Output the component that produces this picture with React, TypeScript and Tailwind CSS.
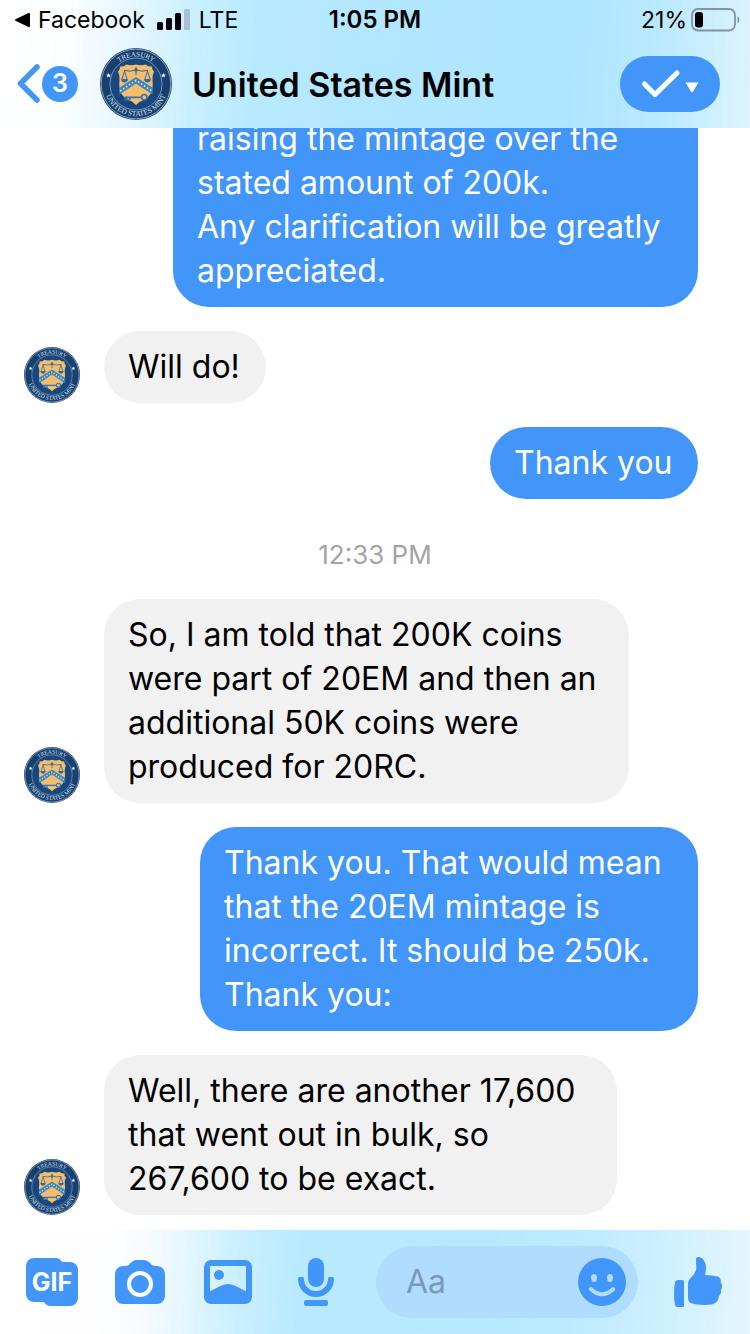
import { useId } from "react";

type Message = {
  id: number;
  from: "me" | "mint";
  lines: string[];
  width: string;
  continued?: boolean;
};

const earlier: Message[] = [
  {
    id: 1,
    from: "me",
    lines: [
      "raising the mintage over the",
      "stated amount of 200k.",
      "Any clarification will be greatly",
      "appreciated.",
    ],
    width: "w-[525px]",
    continued: true,
  },
  { id: 2, from: "mint", lines: ["Will do!"], width: "w-[162px]" },
  { id: 3, from: "me", lines: ["Thank you"], width: "w-[208px]" },
];

const later: Message[] = [
  {
    id: 4,
    from: "mint",
    lines: [
      "So, I am told that 200K coins",
      "were part of 20EM and then an",
      "additional 50K coins were",
      "produced for 20RC.",
    ],
    width: "w-[525px]",
  },
  {
    id: 5,
    from: "me",
    lines: [
      "Thank you. That would mean",
      "that the 20EM mintage is",
      "incorrect. It should be 250k.",
      "Thank you:",
    ],
    width: "w-[498px]",
  },
  {
    id: 6,
    from: "mint",
    lines: [
      "Well, there are another 17,600",
      "that went out in bulk, so",
      "267,600 to be exact.",
    ],
    width: "w-[513px]",
  },
];

function Seal({ className }: { className: string }) {
  const id = useId();
  return (
    <svg viewBox="0 0 72 72" className={className} role="img" aria-label="United States Mint">
      <defs>
        <path id={`${id}-top`} d="M8.500 36a27.500 27.500 0 0 1 55 0" />
        <path id={`${id}-bottom`} d="M3.800 36a32.200 32.200 0 0 0 64.400 0" />
      </defs>
      <circle cx="36" cy="36" r="36" fill="#173f70" />
      <circle cx="36" cy="36" r="34.800" fill="none" stroke="#a9bccb" strokeWidth="0.800" />
      <circle cx="36" cy="36" r="26" fill="#17477e" stroke="#8fabc4" strokeWidth="0.800" />
      <g fill="#dbe6ee" fontFamily="Liberation Serif, serif">
        <text textAnchor="middle" fontSize="7">
          <textPath href={`#${id}-top`} startOffset="50%">TREASURY</textPath>
        </text>
        <text textAnchor="middle" fontSize="7.500">
          <textPath href={`#${id}-bottom`} startOffset="50%">UNITED  STATES  MINT</textPath>
        </text>
      </g>
      <path
        d="M8.500 25l.700 1.600 1.700.100-1.300 1.100.400 1.700-1.500-.900-1.500.900.400-1.700-1.300-1.100 1.700-.100zM63.500 25l.700 1.600 1.700.100-1.300 1.100.400 1.700-1.500-.900-1.500.900.400-1.700-1.300-1.100 1.700-.100z"
        fill="#fff"
      />
      <path
        d="M20 18.500q4 .500 6.500-2 4.500 1.500 9.500 0 5 1.500 9.500 0 2.500 2.500 6.500 2-.500 3 2 5-2 4-1.500 9 1 8-2 13.500-2.500 4-7 6-4.500 1.500-7.500 5-3-3.500-7.500-5-4.500-2-7-6-3-5.500-2-13.500.500-5-1.500-9 2.500-2 2-5z"
        fill="#f3bd6b"
      />
      <g fill="none" stroke="#2f6ba2" strokeWidth="1" strokeLinecap="round">
        <path d="M36 19.500v7M24.500 22.500q6 1.500 11.500-.500 5.500 2 11.500.500M24.500 23l-2.500 8M24.500 23l2.500 8M47.500 23l-2.500 8M47.500 23l2.500 8" />
      </g>
      <path d="M21 31h7q-.500 3.500-3.500 3.500T21 31zM44 31h7q-.500 3.500-3.500 3.500T44 31zM34 22l2-2.500 2 2.500-2 2.500z" fill="#2f6ba2" />
      <path d="M19 40L36 29l17 11-.500 6.500L36 35.500 19.500 46.500z" fill="#3b82bf" />
      <path d="M20 43L36 32.300 52 43" fill="none" stroke="#e5f1f8" strokeWidth="1.600" strokeDasharray="1.600 2" />
      <path d="M24.500 48.500H42v1.800H30.500v2.500h-1.800v-2.500h-1.200v2.500h-3z" fill="#2f73b4" />
      <circle cx="44.300" cy="49.300" r="2.700" fill="none" stroke="#2f73b4" strokeWidth="1.500" />
    </svg>
  );
}

function Row({ message }: { message: Message }) {
  const mine = message.from === "me";
  return (
    <li className={mine ? "flex justify-end" : "flex items-end gap-6"}>
      {!mine && <Seal className="size-14 shrink-0" />}
      <p
        className={`${message.width} max-w-full px-6 py-3.5 whitespace-nowrap ${
          message.continued ? "rounded-b-[36px]" : "rounded-[36px]"
        } ${mine ? "bg-[#4396f9] text-white" : "bg-[#f1f1f1] text-black"}`}
      >
        {message.lines.map((line) => (
          <span key={line} className="block">
            {line}
          </span>
        ))}
      </p>
    </li>
  );
}

function StatusBar() {
  return (
    <div className="grid h-10 grid-cols-3 items-center px-3.5 text-[23px] leading-10">
      <div className="flex items-center whitespace-nowrap">
        <svg viewBox="0 0 16 16" className="mr-2 size-4 shrink-0" aria-hidden="true">
          <path d="M1.500 7.200L14.500 1q1.500-.500 1.500 1v12q0 1.500-1.500 1L1.500 8.800q-1.500-.800 0-1.600z" />
        </svg>
        <a href="#facebook">Facebook</a>
        <svg viewBox="0 0 34 22" className="mr-2 ml-3 h-[22px] w-[34px] shrink-0" aria-label="Signal strength">
          <rect x="0" y="13" width="6" height="8" rx="1.500" />
          <rect x="9" y="9" width="6" height="12" rx="1.500" />
          <rect x="18" y="4" width="6" height="17" rx="1.500" />
          <rect x="27" y="0" width="6" height="21" rx="1.500" fill="#a9c0d8" />
        </svg>
        <span>LTE</span>
      </div>
      <time className="text-center text-[24px] font-semibold">1:05 PM</time>
      <div className="-mr-1 flex items-center justify-end gap-1">
        <span>21%</span>
        <svg viewBox="0 0 49 24" className="h-6 w-[49px] shrink-0" aria-label="Battery">
          <rect x="1" y="1" width="43" height="21.500" rx="6" fill="none" stroke="#8093a9" strokeWidth="1.800" />
          <rect x="4" y="4" width="8" height="15.500" rx="3" />
          <path d="M46.500 8q2 1.500 2 3.700t-2 3.700z" fill="#8093a9" />
        </svg>
      </div>
    </div>
  );
}

function Header() {
  return (
    <header className="shrink-0 bg-[linear-gradient(93deg,#ffffff_0%,#fbfeff_9%,#e4f6ff_18%,#c8efff_26%,#b8eaff_34%,#b1e6ff_55%,#ade5ff_76%,#b9e9ff_87%,#cbefff_94%,#def3ff_100%)]">
      <StatusBar />
      <div className="flex h-[88px] items-center pr-[30px] pl-4">
        <button type="button" aria-label="Back, 3 unread" className="flex shrink-0 items-center text-[#4396f9]">
          <svg viewBox="0 0 26 42" className="h-[42px] w-[26px]" fill="none" stroke="currentColor" strokeWidth="5.500" strokeLinecap="round" strokeLinejoin="round">
            <path d="M21 4L4.500 20.500 21 37" />
          </svg>
          <span className="flex size-9 items-center justify-center rounded-full bg-[#4396f9] text-[25px] font-semibold text-white">
            3
          </span>
        </button>
        <Seal className="ml-[22px] size-[72px] shrink-0" />
        <h1 className="ml-5 flex-1 text-[34px] font-semibold whitespace-nowrap">United States Mint</h1>
        <button type="button" aria-label="Conversation options" className="h-14 w-[100px] shrink-0 rounded-[28px] bg-[#4396f9]">
          <svg viewBox="0 0 100 56" className="h-14 w-[100px]">
            <path d="M24.500 28L35 38.500 57 17" fill="none" stroke="#fff" strokeWidth="5" strokeLinecap="round" strokeLinejoin="round" />
            <path d="M66.500 26.500h11q1 0 .400 1l-5 8.300q-.900 1-1.800 0l-5-8.300q-.600-1 .400-1z" fill="#fff" />
          </svg>
        </button>
      </div>
    </header>
  );
}

const toolClass = "flex h-12 w-12 shrink-0 items-center justify-center";

function Composer() {
  return (
    <footer className="flex h-[104px] shrink-0 items-center gap-9 bg-[linear-gradient(93deg,#ffffff_0%,#fefeff_13%,#f8fcff_19%,#e3f6ff_25%,#c9efff_32%,#b8eaff_40%,#b6e9ff_65%,#bcebff_76%,#cceffe_87%,#e4f6ff_100%)] px-7 text-[#4396f9]">
      <div className="flex shrink-0 gap-10">
        <button type="button" aria-label="GIF" className={toolClass}>
          <svg viewBox="0 0 52 48" className="h-12 w-[52px] shrink-0" fill="currentColor">
            <path d="M8 0h22c5 0 4.500 4 8 4h6a8 8 0 0 1 8 8v28a8 8 0 0 1-8 8H25c-6 0-5-4-9-4H8a8 8 0 0 1-8-8V8a8 8 0 0 1 8-8z" />
            <text x="26" y="33" textAnchor="middle" fill="#fff" fontSize="25" fontWeight="700">
              GIF
            </text>
          </svg>
        </button>
        <button type="button" aria-label="Camera" className={toolClass}>
          <svg viewBox="0 0 50 44" className="h-11 w-[50px] shrink-0" fill="currentColor">
            <path d="M8 6c6 0 5.500-1 8-3.500Q18.500 0 21 0h8q3 0 5.500 2.500C37 5 37 6 42 6a8 8 0 0 1 8 8v22a8 8 0 0 1-8 8H8a8 8 0 0 1-8-8V14a8 8 0 0 1 8-8z" />
            <circle cx="25" cy="24" r="11" fill="none" stroke="#fbfdff" strokeWidth="4" />
          </svg>
        </button>
        <button type="button" aria-label="Photo library" className={toolClass}>
          <svg viewBox="0 0 48 44" className="h-11 w-12 shrink-0" fill="currentColor">
            <path
              fillRule="evenodd"
              d="M7 0h34a7 7 0 0 1 7 7v30a7 7 0 0 1-7 7H7a7 7 0 0 1-7-7V7a7 7 0 0 1 7-7zM7 6a1 1 0 0 0-1 1v24.300L17.500 25.500Q24 22.500 30.500 25.500L42 31.300V7a1 1 0 0 0-1-1z"
            />
            <circle cx="15" cy="15" r="5" />
          </svg>
        </button>
        <button type="button" aria-label="Voice message" className={toolClass}>
          <svg viewBox="0 0 36 48" className="h-12 w-9 shrink-0" fill="currentColor">
            <rect x="10" y="0" width="16" height="29" rx="8" />
            <path d="M1.500 19H4.500Q6 19 6 21A12 12 0 0 0 30 21Q30 19 31.500 19H34.500Q36 19 36 21A18 18 0 0 1 0 21Q0 19 1.500 19z" />
            <rect x="6" y="42" width="24" height="6" rx="2" />
          </svg>
        </button>
      </div>
      <div className="flex h-[72px] min-w-0 flex-1 items-center rounded-full bg-[#b0dcff] pr-3 pl-[30px]">
        <input
          type="text"
          aria-label="Message"
          placeholder="Aa"
          className="min-w-0 flex-1 bg-transparent text-[32px] text-black outline-none placeholder:text-[#7b9ab7]"
        />
        <button type="button" aria-label="Emoji" className="size-12 shrink-0">
          <svg viewBox="0 0 48 48" className="size-12">
            <circle cx="24" cy="24" r="24" fill="currentColor" />
            <ellipse cx="16" cy="20" rx="3" ry="4" fill="#b0dcff" />
            <ellipse cx="32" cy="20" rx="3" ry="4" fill="#b0dcff" />
            <path d="M12.700 31Q24 41.500 35.300 31" fill="none" stroke="#b0dcff" strokeWidth="3.800" strokeLinecap="round" />
          </svg>
        </button>
      </div>
      <button type="button" aria-label="Send like" className="h-[50px] w-12 shrink-0">
        <svg viewBox="0 0 48 50" className="h-[50px] w-12" fill="currentColor">
          <path d="M3.500 23H8.500Q10 23 10 24.500V48.500Q10 50 8.500 50H3.500Q1.500 50 1 48 0 43 0 36.500T1 25.500Q1.500 23 3.500 23z" />
          <path d="M22 2Q22 0 24.500 0C29 .500 32 5 32 10.500Q32 14 31 18 39 18 44.500 19.800 47.500 21.500 46.700 25.500 49.500 29 47 33 47.500 37 44.700 39.500 45 43 42 45.500 39 48 31 48 22 48 17.500 46.300 14 45 14 41V27Q14 23.500 17 20.500 22 15.500 22.300 11.500z" />
        </svg>
      </button>
    </footer>
  );
}

export default function App() {
  return (
    <div className="flex h-screen flex-col overflow-hidden bg-white font-['Inter',sans-serif] text-black">
      <Header />
      <main className="flex min-h-0 flex-1 flex-col justify-end gap-6 overflow-hidden pr-[52px] pb-[15px] pl-6 text-[32px] leading-[44px]">
        <ul className="flex shrink-0 flex-col gap-6">
          {earlier.map((message) => (
            <Row key={message.id} message={message} />
          ))}
        </ul>
        <time className="-mr-7 flex h-[52px] shrink-0 items-center justify-center pt-3 text-[26px] text-[#a3a3a3]">
          12:33 PM
        </time>
        <ul className="flex shrink-0 flex-col gap-6">
          {later.map((message) => (
            <Row key={message.id} message={message} />
          ))}
        </ul>
      </main>
      <Composer />
    </div>
  );
}
